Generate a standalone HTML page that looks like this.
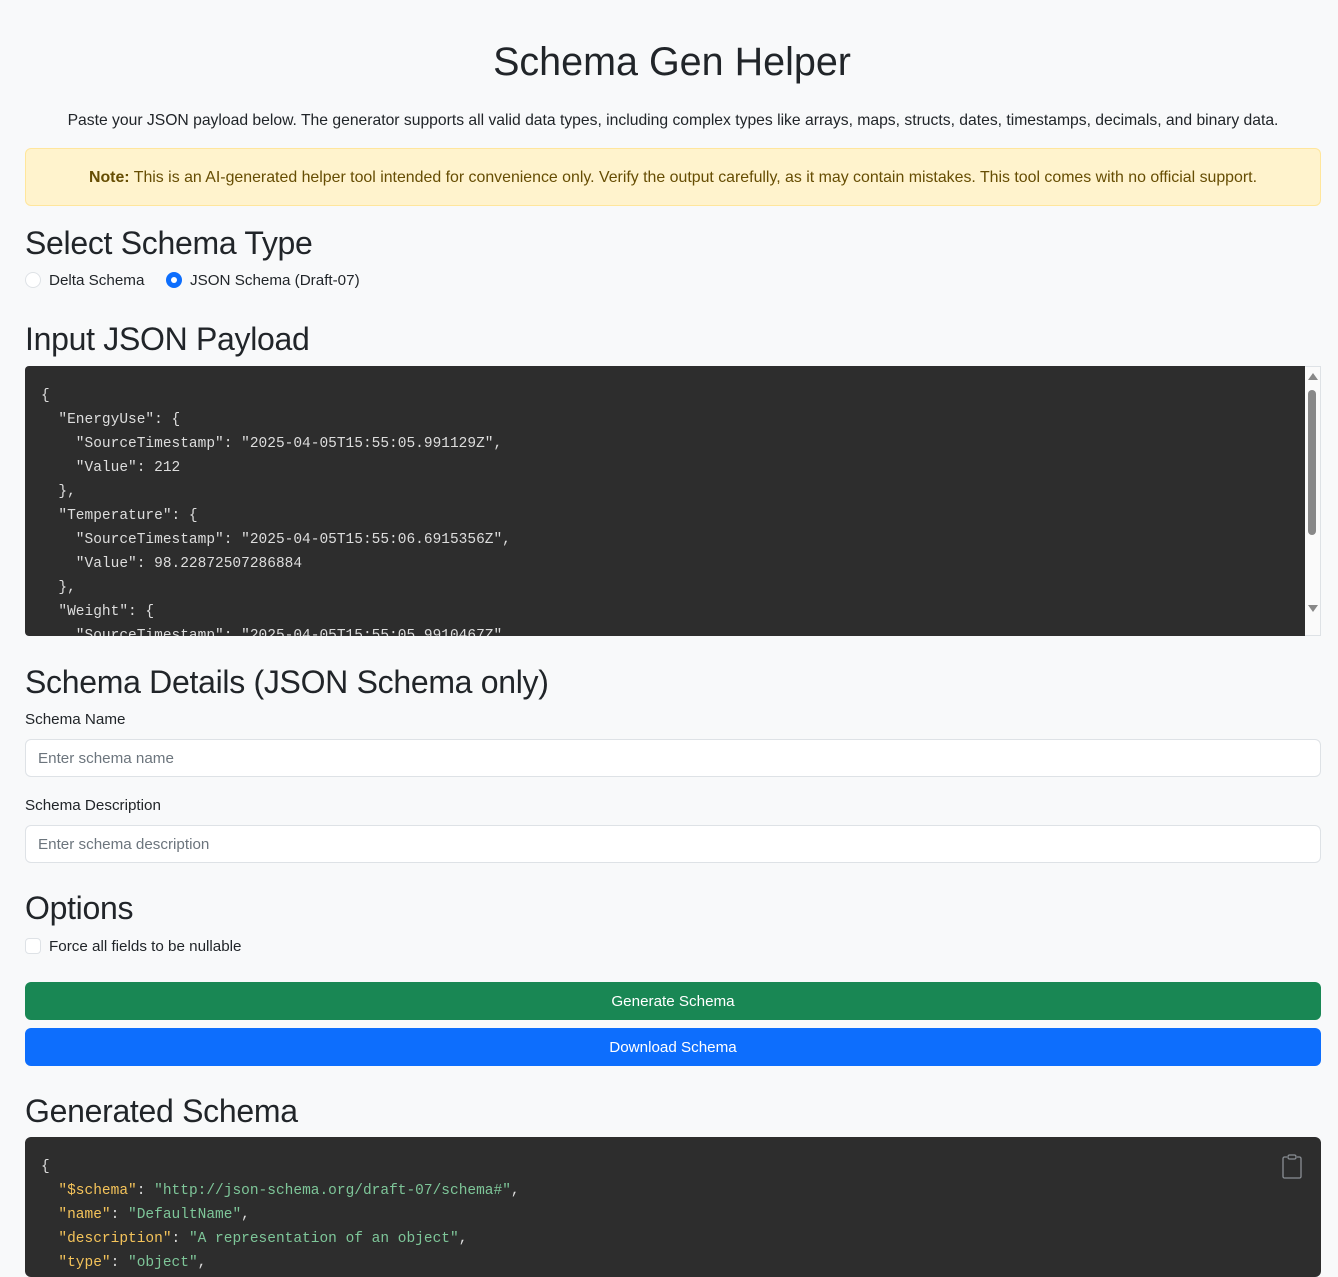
<!DOCTYPE html>
<html><head><meta charset="utf-8">
<style>
*{box-sizing:border-box;margin:0;padding:0}
body{width:1338px;height:1261px;overflow:hidden;background:#f8f9fa;font-family:"Liberation Sans",sans-serif;color:#212529;position:relative}
.a{position:absolute;white-space:nowrap}
h1{font-size:39.5px;font-weight:500;left:0;width:1344px;text-align:center;top:40px}
h2{font-size:32px;font-weight:500;left:25px;letter-spacing:-0.3px}
.sub{font-size:15.7px;left:0;width:1346px;text-align:center;top:112px}
.note{left:25px;top:148px;width:1296px;height:58px;background:#fff3cd;border:1px solid #ffe69c;border-radius:6px;color:#664d03;font-size:15.9px;text-align:center;line-height:57px}
.lbl{font-size:15.2px;left:49px}
.code{left:25px;width:1296px;background:#2d2d2d;border-radius:6px;font-family:"Liberation Mono",monospace;font-size:14.5px;line-height:24px;color:#ddd;padding:18px 0 0 16px;overflow:hidden;white-space:pre}
.inp{left:25px;width:1296px;height:38px;background:#fff;border:1px solid #dee2e6;border-radius:6px;font-size:15.2px;color:#6c757d;padding-left:12px;line-height:38px}
.btn{left:25px;width:1296px;height:38px;border-radius:6px;color:#fff;font-size:15.2px;text-align:center;line-height:40px}
.k{color:#f4c35a}.s{color:#7ec699}
</style></head><body>
<h1 class="a">Schema Gen Helper</h1>
<div class="a sub">Paste your JSON payload below. The generator supports all valid data types, including complex types like arrays, maps, structs, dates, timestamps, decimals, and binary data.</div>
<div class="a note"><b>Note:</b> This is an AI-generated helper tool intended for convenience only. Verify the output carefully, as it may contain mistakes. This tool comes with no official support.</div>
<h2 class="a" style="top:225px">Select Schema Type</h2>
<div class="a" style="left:25px;top:272px;width:16px;height:16px;border:1px solid #dee2e6;border-radius:50%;background:#fff"></div>
<div class="a lbl" style="top:272px">Delta Schema</div>
<div class="a" style="left:166px;top:272px;width:16px;height:16px;border-radius:50%;background:#0d6efd"><div style="position:absolute;left:5px;top:5px;width:6px;height:6px;border-radius:50%;background:#fff"></div></div>
<div class="a lbl" style="left:190px;top:272px">JSON Schema (Draft-07)</div>
<h2 class="a" style="top:321px">Input JSON Payload</h2>
<div class="a code" style="top:366px;height:270px;border-radius:4px">{
  "EnergyUse": {
    "SourceTimestamp": "2025-04-05T15:55:05.991129Z",
    "Value": 212
  },
  "Temperature": {
    "SourceTimestamp": "2025-04-05T15:55:06.6915356Z",
    "Value": 98.22872507286884
  },
  "Weight": {
    "SourceTimestamp": "2025-04-05T15:55:05.9910467Z",</div>
<div class="a" style="left:1305px;top:366px;width:16px;height:270px;background:#fafafa;border:1px solid #dee2e6;border-left:none">
<div style="position:absolute;left:3px;top:6px;width:0;height:0;border-left:5px solid transparent;border-right:5px solid transparent;border-bottom:7px solid #888"></div>
<div style="position:absolute;left:3px;top:23px;width:8px;height:145px;background:#888;border-radius:4px"></div>
<div style="position:absolute;left:3px;top:238px;width:0;height:0;border-left:5px solid transparent;border-right:5px solid transparent;border-top:7px solid #888"></div>
</div>
<h2 class="a" style="top:664px">Schema Details (JSON Schema only)</h2>
<div class="a lbl" style="left:25px;top:711px">Schema Name</div>
<div class="a inp" style="top:739px">Enter schema name</div>
<div class="a lbl" style="left:25px;top:797px">Schema Description</div>
<div class="a inp" style="top:825px">Enter schema description</div>
<h2 class="a" style="top:890px">Options</h2>
<div class="a" style="left:25px;top:938px;width:16px;height:16px;border:1px solid #dee2e6;border-radius:4px;background:#fff"></div>
<div class="a lbl" style="top:938px">Force all fields to be nullable</div>
<div class="a btn" style="top:982px;background:#198754">Generate Schema</div>
<div class="a btn" style="top:1028px;background:#0d6efd">Download Schema</div>
<h2 class="a" style="top:1093px">Generated Schema</h2>
<div class="a code" style="top:1137px;height:140px">{
  <span class="k">"$schema"</span>: <span class="s">"http://json-schema.org/draft-07/schema#"</span>,
  <span class="k">"name"</span>: <span class="s">"DefaultName"</span>,
  <span class="k">"description"</span>: <span class="s">"A representation of an object"</span>,
  <span class="k">"type"</span>: <span class="s">"object"</span>,</div>
<svg class="a" style="left:1280px;top:1153px" width="25" height="27" viewBox="0 0 25 27"><path d="M7 4H4.5a1.5 1.5 0 0 0-1.5 1.5v18A1.5 1.5 0 0 0 4.5 25h15a1.5 1.5 0 0 0 1.5-1.5v-18A1.5 1.5 0 0 0 19.5 4H17" fill="none" stroke="#8a8f95" stroke-width="1.3"/><rect x="8" y="2" width="8" height="4" rx="1.5" fill="none" stroke="#8a8f95" stroke-width="1.3"/></svg>
</body></html>
